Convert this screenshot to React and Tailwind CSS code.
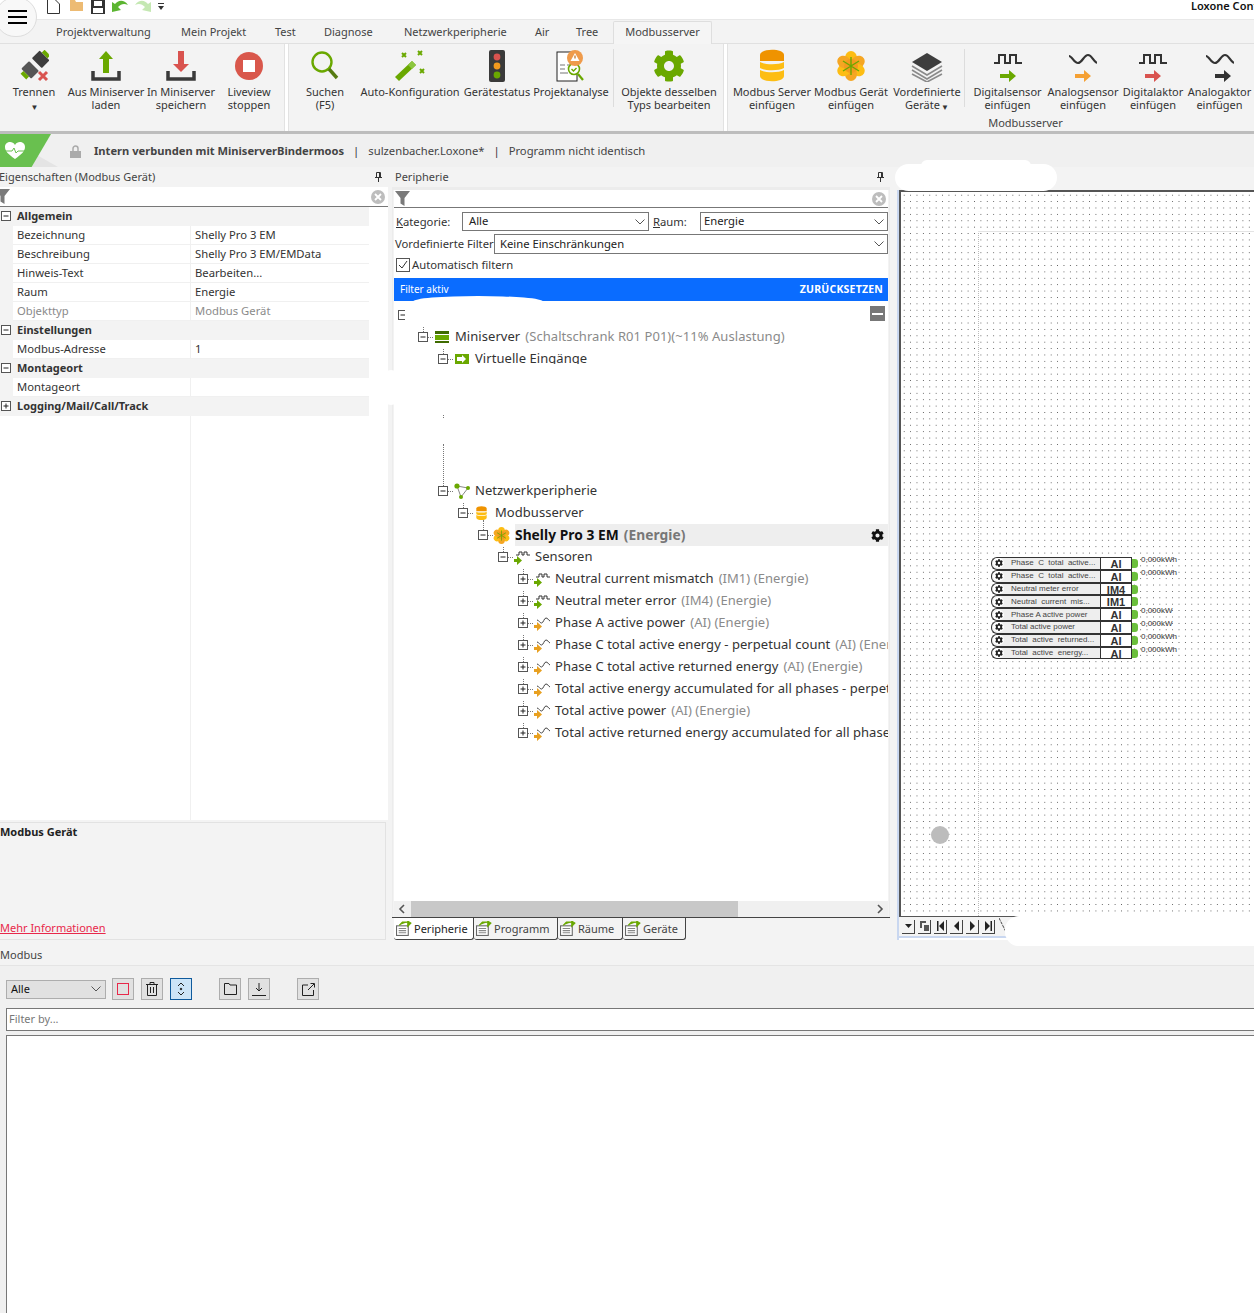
import React from "react";
import { FaCog } from "react-icons/fa";

const Pulse = ({ w = 28, h = 12, c = "#333", sw = 2 }) => (
  <svg width={w} height={h} viewBox="0 0 28 12" fill="none" stroke={c} strokeWidth={sw}>
    <path d="M0 10h5V2h6v8h5V2h6v8h6" />
  </svg>
);

const Wave = ({ w = 28, h = 12, c = "#333", sw = 2.2 }) => (
  <svg width={w} height={h} viewBox="0 0 28 12" fill="none" stroke={c} strokeWidth={sw}>
    <path d="M0 3c3 0 5 7 9 7s6-8 10-8 5 6 9 8" />
  </svg>
);

const Arrow = ({ c }) => (
  <svg width="16" height="12" viewBox="0 0 16 12" fill={c}>
    <path d="M0 4h9V0l7 6-7 6V8H0z" />
  </svg>
);

const SensorIcon = ({ kind, arrow, shift = 0 }) => (
  <div className="flex flex-col items-center gap-[5px] pt-[2px]">
    {kind === "pulse" ? <Pulse /> : <Wave />}
    <div style={{ marginLeft: shift }}>
      <Arrow c={arrow} />
    </div>
  </div>
);

const PlugIcon = () => (
  <svg width="30" height="32" viewBox="0 0 30 32">
    <g transform="rotate(45 15 16)">
      <rect x="8" y="1" width="14" height="11" rx="1" fill="#3d3d3d" />
      <rect x="11" y="-3" width="8" height="4" fill="#6aa800" />
      <rect x="8" y="16" width="14" height="11" rx="1" fill="#555" />
      <rect x="11" y="27" width="8" height="4" fill="#6aa800" />
    </g>
    <path d="M20 22l8 8M28 22l-8 8" stroke="#d9534f" strokeWidth="3" />
  </svg>
);

const TrayIcon = ({ up }) => (
  <svg width="30" height="32" viewBox="0 0 30 32">
    <path d="M2 21v8h26v-8" fill="none" stroke="#3a3a3a" strokeWidth="3.5" />
    {up ? (
      <path d="M15 1l7 8h-4v14h-6V9H8z" fill="#6aa800" />
    ) : (
      <path d="M12 1h6v13h5l-8 8-8-8h5z" fill="#d9534f" />
    )}
  </svg>
);

const StopIcon = () => (
  <svg width="30" height="30" viewBox="0 0 30 30">
    <circle cx="15" cy="15" r="14" fill="#d9574b" />
    <rect x="9" y="9" width="12" height="12" fill="#fff" />
  </svg>
);

const SearchIcon = () => (
  <svg width="28" height="32" viewBox="0 0 28 32" fill="none">
    <circle cx="11" cy="12" r="9.5" stroke="#6aa800" strokeWidth="2.4" />
    <path d="M18 19l8 9" stroke="#557a10" strokeWidth="3.4" />
  </svg>
);

const WandIcon = () => (
  <svg width="32" height="32" viewBox="0 0 32 32">
    <path d="M1 27L18 11l4 4L5 31z" fill="#6aa800" />
    <path d="M14 15l4-4 4 4-4 4z" fill="#8cc63f" />
    <path d="M8 3l4 4M12 3L8 7M24 1l4 4M28 1l-4 4M26 19l4 4M30 19l-4 4" stroke="#6aa800" strokeWidth="2" />
  </svg>
);

const TrafficIcon = () => (
  <svg width="16" height="32" viewBox="0 0 16 32">
    <rect width="16" height="32" rx="2" fill="#3a3a3a" />
    <circle cx="8" cy="7" r="3.4" fill="#d9534f" />
    <circle cx="8" cy="16" r="3.4" fill="#f39a1e" />
    <circle cx="8" cy="25" r="3.4" fill="#6aa800" />
  </svg>
);

const AnalyseIcon = () => (
  <svg width="30" height="32" viewBox="0 0 30 32">
    <rect x="1" y="2" width="20" height="29" fill="#fff" stroke="#222" />
    <path d="M4 15h5M4 19h5M4 23h8M11 15h3" stroke="#777" strokeWidth="1.2" />
    <circle cx="18" cy="19" r="5.5" fill="#fff" stroke="#6aa800" strokeWidth="1.6" />
    <path d="M15.5 19l2 2 3-3" stroke="#6aa800" fill="none" strokeWidth="1.4" />
    <path d="M22 24l5 6" stroke="#6aa800" strokeWidth="2.2" />
    <circle cx="19" cy="8" r="8" fill="#ef9b4b" />
    <path d="M19 3l4.5 8h-9z" fill="#fff" />
    <rect x="18.4" y="5.5" width="1.2" height="3" fill="#b96a20" />
  </svg>
);

const DbIcon = ({ s = 30 }) => (
  <svg width={s} height={(s * 34) / 30} viewBox="0 0 30 34">
    <path d="M3 6c0-7 24-7 24 0v6H3z" fill="#ef9300" />
    <path d="M3 13c5 3 19 3 24 0v6c-5 3-19 3-24 0z" fill="#fdbd13" />
    <path d="M3 21c5 3 19 3 24 0v6c0 7-24 7-24 0z" fill="#fdbd13" />
  </svg>
);

const FlowerIcon = ({ s = 30 }) => (
  <svg width={s} height={s} viewBox="0 0 30 30">
    {[0, 60, 120, 180, 240, 300].map((a) => (
      <ellipse key={a} cx="15" cy="7" rx="6" ry="7" fill={a % 120 === 0 ? "#fdbd13" : "#f5a623"} transform={`rotate(${a} 15 15)`} />
    ))}
    <circle cx="15" cy="15" r="7" fill="#f39a1e" />
    <path d="M15 6v18M7 10l16 10M23 10L7 20" stroke="#6aa800" strokeWidth="1.4" />
  </svg>
);

const LayersIcon = () => (
  <svg width="32" height="32" viewBox="0 0 32 32">
    <path d="M16 3l15 9-15 9-15-9z" fill="#3d3d3d" />
    <path d="M1 16l15 9 15-9M1 20l15 9 15-9M1 24l15 8 15-8" fill="none" stroke="#8a8a8a" strokeWidth="1.6" />
  </svg>
);

const RibbonItem = ({ w, icon, top, bottom, arrow }) => (
  <div className="flex flex-col items-center shrink-0 whitespace-nowrap" style={{ width: w }}>
    <div className="h-[34px] flex items-center justify-center">{icon}</div>
    <div className="mt-[2px] leading-[13px] text-center text-[#333]">
      <div>{top}</div>
      <div>
        {bottom}
        {arrow && <span className="text-[8px] align-middle ml-[1px]">▼</span>}
      </div>
    </div>
  </div>
);

const Sep = () => <div className="w-px h-[58px] bg-[#dcdcdc] shrink-0" />;

const Pin = () => (
  <svg width="7" height="10" viewBox="0 0 7 10" fill="none" stroke="#333">
    <path d="M1.5 .5h4v5h-4zM0 5.5h7M3.5 6v4M4.5 1v4" />
  </svg>
);

const Funnel = () => (
  <svg width="15" height="15" viewBox="0 0 15 15" fill="#7a7a7a">
    <path d="M0 0h15L9.5 7v8l-4-2.5V7z" />
  </svg>
);

const ClearBtn = () => (
  <div className="w-[14px] h-[14px] rounded-full bg-[#bdbdbd] flex items-center justify-center">
    <svg width="8" height="8" viewBox="0 0 8 8" stroke="#fff" strokeWidth="1.8">
      <path d="M1 1l6 6M7 1L1 7" />
    </svg>
  </div>
);

const Box = ({ open }) => (
  <svg width="11" height="11" viewBox="0 0 11 11" fill="none" stroke="#555">
    <rect x=".5" y=".5" width="9" height="9" fill="#fff" />
    <path d="M2.5 5h5" stroke="#222" />
    {!open && <path d="M5 2.5v5" stroke="#222" />}
  </svg>
);

const PropRow = ({ label, value, muted }) => (
  <div className={`flex h-[19px] leading-[18px] ${muted ? "text-[#8a8a8a]" : "text-[#333]"}`}>
    <div className="w-[13px] shrink-0 bg-[#f3f3f3]" />
    <div className="w-[178px] shrink-0 pl-[4px] border-b border-r border-[#f0f0f0]">{label}</div>
    <div className="w-[178px] shrink-0 pl-[4px] border-b border-[#f0f0f0]">{value}</div>
  </div>
);

const PropGroup = ({ label, open = true }) => (
  <div className="flex items-center h-[19px] w-[369px] bg-[#f3f3f3] font-bold text-[11px] text-[#333]">
    <div className="w-[17px] pl-px shrink-0">
      <Box open={open} />
    </div>
    {label}
  </div>
);

// tree connector: box with dotted lines, all rows share it
const Expander = ({ open }) => (
  <div className="relative w-[15px] h-[22px] shrink-0">
    <div className="absolute left-[5px] -top-[4px] h-[10px] border-l border-dotted border-[#777]" />
    <div className="absolute left-0 top-[6px]">
      <Box open={open} />
    </div>
    <div className="absolute left-[10px] top-[11px] w-[5px] border-t border-dotted border-[#777]" />
  </div>
);

const SmallSensor = ({ kind }) => (
  <svg width="17" height="17" viewBox="0 0 17 17" fill="none">
    {kind === "pulse" ? (
      <path d="M3 6h3V3h3v3h2V3h3v3h3" stroke="#333" strokeWidth="1" />
    ) : (
      <path d="M4 5c2 0 2.5 3 4.5 3S11 3 13 3s2 2 4 3" stroke="#444" strokeWidth="1" />
    )}
    <path d="M0 10h3V7l5 4.5L3 16v-3H0z" transform="translate(1 0)" fill={kind === "pulse" ? "#6aa800" : "#e8a020"} />
  </svg>
);

const MiniserverIcon = () => (
  <svg width="14" height="12" viewBox="0 0 14 12">
    <rect width="14" height="3" fill="#3f6b00" />
    <rect y="4" width="14" height="5" fill="#6aa800" />
    <rect y="10" width="14" height="2" fill="#3f6b00" />
  </svg>
);

const NetIcon = () => (
  <svg width="16" height="16" viewBox="0 0 16 16">
    <path d="M3 3l11 2-7 9z" fill="none" stroke="#888" />
    <circle cx="3" cy="3" r="2.6" fill="#6aa800" />
    <circle cx="14" cy="5" r="2" fill="#6aa800" />
    <circle cx="7" cy="14" r="2" fill="#6aa800" />
  </svg>
);

const TreeRow = ({ level, open, icon, name, extra }) => (
  <div className="flex items-center h-[22px] whitespace-nowrap overflow-hidden" style={{ paddingLeft: 24 + level * 20 }}>
    <Expander open={open} />
    <div className="w-[17px] shrink-0 flex items-center justify-center">{icon}</div>
    <span className="ml-[5px] text-[#333]">{name}</span>
    {extra && <span className="ml-[5px] text-[#8a8a8a]">{extra}</span>}
  </div>
);

const sensors = [
  ["pulse", "Neutral current mismatch", "(IM1) (Energie)"],
  ["pulse", "Neutral meter error", "(IM4) (Energie)"],
  ["wave", "Phase A active power", "(AI) (Energie)"],
  ["wave", "Phase C total active energy - perpetual count", "(AI) (Energie)"],
  ["wave", "Phase C total active returned energy", "(AI) (Energie)"],
  ["wave", "Total active energy accumulated for all phases - perpetual count", "(AI) (Energie)"],
  ["wave", "Total active power", "(AI) (Energie)"],
  ["wave", "Total active returned energy accumulated for all phases", "(AI) (Energie)"],
];

const nodeRows = [
  ["Phase  C  total  active...", "AI", "0,000kWh"],
  ["Phase  C  total  active...", "AI", "0,000kWh"],
  ["Neutral meter error", "IM4", ""],
  ["Neutral  current  mis...", "IM1", ""],
  ["Phase A active power", "AI", "0,000kW"],
  ["Total active power", "AI", "0,000kW"],
  ["Total  active  returned...", "AI", "0,000kWh"],
  ["Total  active  energy...", "AI", "0,000kWh"],
];

const SelectBox = ({ className, value, pad = "pl-[6px]" }) => (
  <div className={`flex items-center justify-between border border-[#777] bg-white ${pad} pr-[3px] ${className}`}>
    <span className="text-[#222]">{value}</span>
    <svg width="10" height="6" viewBox="0 0 10 6" fill="none" stroke="#555">
      <path d="M.5 .5L5 5 9.5 .5" />
    </svg>
  </div>
);

const TabIcon = () => (
  <svg width="16" height="15" viewBox="0 0 15 14" fill="none">
    <rect x=".5" y="4.5" width="11" height="9" fill="#fff" stroke="#666" />
    <path d="M2.5 7h7M2.5 9h7M2.5 11h7" stroke="#888" />
    <path d="M3 4l3-3h5M11 0l3 2-3 3z" fill="#6aa800" stroke="#6aa800" />
  </svg>
);

const BottomTab = ({ w, label, active }) => (
  <div
    style={{ width: w }}
    className={`h-[22px] flex items-center pl-[2px] gap-[2px] border-r border-b border-[#444] rounded-br-[3px] rounded-bl-[3px] ${
      active ? "bg-white text-[#222]" : "bg-[#f3f3f3] text-[#444]"
    }`}
  >
    <TabIcon />
    <span className="pt-px">{label}</span>
  </div>
);

const NavBtn = ({ children }) => (
  <div className="w-[13px] h-[14px] border-r border-b border-[#444] bg-[#f3f3f3] flex items-center justify-center">
    <svg width="9" height="10" viewBox="0 0 9 10" fill="#222">
      {children}
    </svg>
  </div>
);

const ToolBtn = ({ children, active }) => (
  <div
    className={`w-[22px] h-[22px] flex items-center justify-center border ${
      active ? "border-[#0f5a9c] bg-[#cce4f7]" : "border-[#adadad] bg-[#e1e1e1]"
    }`}
  >
    {children}
  </div>
);

const App = () => {
  return (
    <div className="relative w-[1254px] h-[1313px] overflow-hidden bg-[#f3f3f3] font-['Noto_Sans',sans-serif] text-[11px] text-[#333]">
      {/* titlebar */}
      <div className="h-[19px] bg-white flex items-start pl-[47px] relative">
        <svg width="13" height="14" viewBox="0 0 13 14" fill="#fff" stroke="#333" className="mr-[10px]">
          <path d="M.5 0v13.5h12V4L8.5 0" />
        </svg>
        <svg width="13" height="11" viewBox="0 0 13 11" className="mr-[8px]">
          <path d="M0 0h5l1 2h7v9H0z" fill="#edbb73" />
        </svg>
        <svg width="14" height="14" viewBox="0 0 14 14" className="mr-[7px]">
          <path d="M0 0h14v14H0z" fill="#333" />
          <path d="M3 0h8v5H3z" fill="#fff" transform="translate(0 1)" />
          <path d="M2 8h10v5H2z" fill="#fff" />
        </svg>
        <svg width="16" height="12" viewBox="0 0 16 12" className="mr-[7px]">
          <path d="M0 12V2l3 2c3-4 9-5 13 1-4-2-7-1-10 2l3 3z" fill="#5cb531" />
        </svg>
        <svg width="16" height="12" viewBox="0 0 16 12" className="mr-[7px]">
          <path d="M16 12V2l-3 2C10 0 4-1 0 5c4-2 7-1 10 2l-3 3z" fill="#c5e8b3" />
        </svg>
        <svg width="6" height="8" viewBox="0 0 6 8" fill="#333" className="mt-[3px]">
          <path d="M0 0h6v1H0zM0 3h6L3 7z" />
        </svg>
        <span className="absolute left-[1191px] top-[-2px] font-semibold text-[11px] text-[#111] whitespace-nowrap">Loxone Config</span>
      </div>

      {/* hamburger */}
      <div className="absolute -left-[5px] -top-[3px] w-[42px] h-[40px] rounded-full bg-[#f8f8f8] border border-[#ddd] flex flex-col gap-[4px] items-center justify-center pl-[2px]">
        <div className="w-[19px] h-[2px] bg-black" />
        <div className="w-[19px] h-[2px] bg-black" />
        <div className="w-[19px] h-[2px] bg-black" />
      </div>

      {/* ribbon tabs */}
      <div className="h-[25px] flex items-end pl-[56px] border-t border-[#e8e8e8] border-b border-b-[#e0e0e0] text-[#444] whitespace-nowrap">
        <div className="h-[23px] leading-[24px] w-[125px]">Projektverwaltung</div>
        <div className="h-[23px] leading-[24px] w-[94px]">Mein Projekt</div>
        <div className="h-[23px] leading-[24px] w-[49px]">Test</div>
        <div className="h-[23px] leading-[24px] w-[80px]">Diagnose</div>
        <div className="h-[23px] leading-[24px] w-[131px]">Netzwerkperipherie</div>
        <div className="h-[23px] leading-[24px] w-[41px]">Air</div>
        <div className="h-[23px] leading-[24px] w-[37px]">Tree</div>
        <div className="h-[23px] leading-[20px] w-[99px] text-center border border-b-0 border-[#dedede] rounded-t-[2px] bg-[#f5f5f5] -mb-px">Modbusserver</div>
      </div>

      {/* ribbon */}
      <div className="h-[90px] flex border-b-[3px] border-[#bdbdbd] bg-[#f3f3f3]">
        <div className="w-[285px] pt-[5px] flex border-r border-[#e2e2e2] shrink-0">
          <RibbonItem w={68} icon={<PlugIcon />} top="Trennen" bottom="" arrow />
          <RibbonItem w={76} icon={<TrayIcon up />} top="Aus Miniserver" bottom="laden" />
          <RibbonItem w={74} icon={<TrayIcon />} top="In Miniserver" bottom="speichern" />
          <RibbonItem w={62} icon={<StopIcon />} top="Liveview" bottom="stoppen" />
        </div>
        <div className="w-[3px] shrink-0 bg-white" />
        <div className="w-[436px] pt-[5px] pl-[6px] flex border-r border-l border-[#e2e2e2] shrink-0">
          <RibbonItem w={60} icon={<SearchIcon />} top="Suchen" bottom="(F5)" />
          <RibbonItem w={110} icon={<WandIcon />} top="Auto-Konfiguration" bottom="" />
          <RibbonItem w={64} icon={<TrafficIcon />} top="Gerätestatus" bottom="" />
          <RibbonItem w={84} icon={<AnalyseIcon />} top="Projektanalyse" bottom="" />
          <Sep />
          <RibbonItem w={110} icon={<FaCog size={32} color="#6aa800" />} top="Objekte desselben" bottom="Typs bearbeiten" />
        </div>
        <div className="w-[3px] shrink-0 bg-white" />
        <div className="flex-1 pt-[5px] border-l border-[#e2e2e2] relative">
          <div className="flex pl-[4px]">
            <RibbonItem w={80} icon={<DbIcon />} top="Modbus Server" bottom="einfügen" />
            <RibbonItem w={78} icon={<FlowerIcon />} top="Modbus Gerät" bottom="einfügen" />
            <RibbonItem w={74} icon={<LayersIcon />} top="Vordefinierte" bottom="Geräte" arrow />
            <Sep />
            <RibbonItem w={85} icon={<SensorIcon kind="pulse" arrow="#6aa800" />} top="Digitalsensor" bottom="einfügen" />
            <RibbonItem w={66} icon={<SensorIcon kind="wave" arrow="#f5a033" />} top="Analogsensor" bottom="einfügen" />
            <RibbonItem w={74} icon={<SensorIcon kind="pulse" arrow="#d9534f" />} top="Digitalaktor" bottom="einfügen" />
            <RibbonItem w={59} icon={<SensorIcon kind="wave" arrow="#333" shift={6} />} top="Analogaktor" bottom="einfügen" />
          </div>
          <div className="pl-[69px] text-center leading-[13px] text-[#444] mt-[3px]">Modbusserver</div>
        </div>
      </div>

      {/* status bar */}
      <div className="h-[33px] flex items-center bg-[#f0f0f0] whitespace-nowrap relative text-[11.25px] pt-[2px]">
        <div className="absolute left-0 top-0 w-[58px] h-[33px] bg-[#e4e4e4] [clip-path:polygon(0_0,100%_100%,0_100%)]" />
        <div className="absolute left-0 top-0 w-[51px] h-[33px] bg-[#69c04f] [clip-path:polygon(0_0,100%_0,62%_100%,0_100%)] flex items-center pl-[5px]">
          <svg width="20" height="18" viewBox="0 0 20 18">
            <path d="M10 17C3 12 0 9 0 5c0-5 7-7 10-2 3-5 10-3 10 2 0 4-3 7-10 12z" fill="#fff" />
            <path d="M0 9h7l2-3 2 5 2-2h7" stroke="#69c04f" fill="none" />
          </svg>
        </div>
        <svg width="11" height="13" viewBox="0 0 11 13" className="ml-[70px] mr-[13px]">
          <path d="M3 6V3.5a2.5 2.5 0 015 0V6" fill="none" stroke="#aaa" strokeWidth="1.5" />
          <rect y="6" width="11" height="7" fill="#aaa" />
        </svg>
        <span className="font-bold text-[11.15px] text-[#444]">Intern verbunden mit MiniserverBindermoos</span>
        <span className="mx-[9px]">|</span>
        <span className="text-[#444]">sulzenbacher.Loxone*</span>
        <span className="mx-[9px]">|</span>
        <span className="text-[#444]">Programm nicht identisch</span>
      </div>

      {/* main */}
      <div className="flex h-[773px]">
        {/* properties */}
        <div className="w-[388px] shrink-0 flex flex-col">
          <div className="h-[20px] flex items-center justify-between pr-[6px] text-[#444]">
            <span className="-ml-px">Eigenschaften (Modbus Gerät)</span>
            <Pin />
          </div>
          <div className="h-[20px] bg-white border-b border-[#777] flex items-center justify-between pr-[3px]">
            <div className="-ml-[5px]">
              <Funnel />
            </div>
            <ClearBtn />
          </div>
          <div className="flex-1 bg-white flex flex-col text-[11.25px]">
            <PropGroup label="Allgemein" />
            <PropRow label="Bezeichnung" value="Shelly Pro 3 EM" />
            <PropRow label="Beschreibung" value="Shelly Pro 3 EM/EMData" />
            <PropRow label="Hinweis-Text" value="Bearbeiten..." />
            <PropRow label="Raum" value="Energie" />
            <PropRow label="Objekttyp" value="Modbus Gerät" muted />
            <PropGroup label="Einstellungen" />
            <PropRow label="Modbus-Adresse" value="1" />
            <PropGroup label="Montageort" />
            <PropRow label="Montageort" value="" />
            <PropGroup label="Logging/Mail/Call/Track" open={false} />
            <div className="flex-1 ml-[190px] border-l border-[#f0f0f0]" />
          </div>
          <div className="h-[118px] mt-[2px] border border-[#e2e2e2] border-l-0 mr-[2px] flex flex-col justify-between pb-[3px] bg-[#f3f3f3]">
            <div className="font-bold text-[#222] mt-[1px]">Modbus Gerät</div>
            <a className="text-[#e8284a] underline">Mehr Informationen</a>
          </div>
        </div>

        {/* peripherie */}
        <div className="w-[498px] ml-[4px] shrink-0 flex flex-col">
          <div className="h-[20px] flex items-center justify-between pl-[3px] pr-[6px] text-[#444]">
            <span>Peripherie</span>
            <Pin />
          </div>
          <div className="h-[730px] flex flex-col pl-[1px] pr-px border-l border-r border-t-[3px] border-[#ececec] bg-[#f3f3f3]">
            <div className="h-[18px] bg-white border-b border-[#777] flex items-center justify-between pr-[2px] pl-[1px] shrink-0">
              <Funnel />
              <ClearBtn />
            </div>
            <div className="text-[11.25px] bg-white shrink-0">
              <div className="h-[23px] flex items-end pl-[2px]">
                <span className="w-[66px]">
                  <u>K</u>ategorie:
                </span>
                <SelectBox className="w-[187px] h-[19px]" value="Alle" />
                <span className="w-[51px] pl-[4px]">
                  <u>R</u>aum:
                </span>
                <SelectBox className="w-[188px] h-[19px]" value="Energie" pad="pl-[3px]" />
              </div>
              <div className="h-[23px] pt-[3px] flex items-center">
                <span className="w-[100px] pl-px whitespace-nowrap">Vordefinierte Filter</span>
                <SelectBox className="w-[394px] h-[20px]" value="Keine Einschränkungen" pad="pl-[5px]" />
              </div>
              <div className="h-[24px] flex items-center pl-[2px] gap-[2px] pb-[2px]">
                <div className="w-[14px] h-[14px] border border-[#555] flex items-center justify-center">
                  <svg width="10" height="10" viewBox="0 0 10 10" fill="none" stroke="#333">
                    <path d="M1 5l3 3 5-7" />
                  </svg>
                </div>
                Automatisch filtern
              </div>
            </div>
            <div className="h-[23px] shrink-0 bg-[#0a6cff] text-white flex items-center justify-between pl-[6px] pr-[5px] text-[10px] relative overflow-hidden">
              <span>Filter aktiv</span>
              <span className="font-bold text-[10.5px] tracking-[0.2px]">ZURÜCKSETZEN</span>
              <div className="absolute left-[19px] -bottom-[6px] w-[130px] h-[11px] rounded-[50%] bg-white" />
            </div>
            <div className="flex-1 bg-white relative overflow-hidden text-[13px] tracking-[0.05px] pt-[3px]">
              <div className="absolute right-[3px] top-[5px] w-[15px] h-[15px] bg-[#777] flex items-center justify-center">
                <div className="w-[11px] h-[2px] bg-white" />
              </div>
              <div className="h-[22px] flex items-center pl-[4px]">
                <div className="w-[7px] h-[10px] overflow-hidden">
                  <Box open />
                </div>
              </div>
              <TreeRow level={0} open icon={<MiniserverIcon />} name="Miniserver" extra="(Schaltschrank R01 P01)(~11% Auslastung)" />
              <div className="h-[22px]">
                <div className="h-[16px] overflow-hidden">
                  <TreeRow
                    level={1}
                    open
                    icon={
                      <svg width="14" height="10" viewBox="0 0 14 10">
                        <rect width="14" height="10" fill="#6aa800" />
                        <path d="M2 3h5V1l4 4-4 4V7H2z" fill="#fff" />
                      </svg>
                    }
                    name="Virtuelle Eingänge"
                  />
                </div>
              </div>
              <div className="h-[110px] relative">
                <div className="absolute left-[49px] top-[45px] h-[3px] border-l border-dotted border-[#777]" />
                <div className="absolute left-[49px] bottom-0 h-[36px] border-l border-dotted border-[#777]" />
              </div>
              <TreeRow level={1} open icon={<NetIcon />} name="Netzwerkperipherie" />
              <TreeRow level={2} open icon={<DbIcon s={13} />} name="Modbusserver" />
              <div className="relative">
                <div className="absolute left-[121px] right-0 top-0 h-[22px] bg-[#eeeeee]" />
                <div className="relative flex items-center h-[22px] whitespace-nowrap pl-[84px]">
                  <Expander open />
                  <div className="w-[17px] shrink-0 flex items-center justify-center">
                    <FlowerIcon s={17} />
                  </div>
                  <span className="ml-[5px] font-bold text-[13.75px] text-[#111]">Shelly Pro 3 EM</span>
                  <span className="ml-[5px] font-bold text-[13.75px] text-[#777]">(Energie)</span>
                  <FaCog size={13} color="#111" className="ml-auto mr-[4px]" />
                </div>
              </div>
              <TreeRow level={4} open icon={<SmallSensor kind="pulse" />} name="Sensoren" />
              {sensors.map(([kind, name, extra]) => (
                <TreeRow key={name} level={5} icon={<SmallSensor kind={kind} />} name={name} extra={extra} />
              ))}
            </div>
            <div className="h-[16px] shrink-0 bg-[#f0f0f0] flex items-center justify-between px-[4px] relative">
              <svg width="7" height="10" viewBox="0 0 7 10" fill="none" stroke="#555" strokeWidth="1.6">
                <path d="M6 1L2 5l4 4" />
              </svg>
              <div className="absolute left-[17px] top-0 w-[327px] h-[16px] bg-[#c8c8c8]" />
              <svg width="7" height="10" viewBox="0 0 7 10" fill="none" stroke="#555" strokeWidth="1.6">
                <path d="M1 1l4 4-4 4" />
              </svg>
            </div>
          </div>
          <div className="h-[23px] border-t border-[#444] flex pl-[2px] shrink-0">
            <BottomTab w={80} label="Peripherie" active />
            <BottomTab w={84} label="Programm" />
            <BottomTab w={65} label="Räume" />
            <BottomTab w={63} label="Geräte" />
          </div>
        </div>

        {/* canvas */}
        <div className="ml-[7px] flex-1 relative flex flex-col">
          <div className="h-[23px] shrink-0" />
          <div className="flex-1 bg-white border-l-[2px] border-[#c9d7f0]">
            <div className="relative h-[727px] border-l-[2px] border-t-[2px] border-b-[1px] border-[#555] bg-[radial-gradient(circle,#555_0.7px,transparent_0.9px)] bg-[size:6.4px_6.4px] bg-white">
              <div className="absolute left-[77px] top-[39px] bottom-0 border-l border-dotted border-[#bbb]" />
              <div className="absolute left-[77px] top-[39px] right-0 border-t border-[#e4e4e4]" />
              <div className="absolute left-[30px] top-[634px] w-[18px] h-[18px] rounded-full bg-[#bcbcbc]" />
              <div className="absolute left-[90px] top-[365px] w-[200px]">
                {nodeRows.map(([label, type, value], i) => (
                  <div key={i} className="flex h-[12.8px] relative font-['Liberation_Sans',sans-serif]">
                    <div className="w-[109px] border border-[#333] border-r-0 rounded-l-[6px] bg-[#eeeeee] flex items-center overflow-hidden">
                      <div className="w-[11px] h-[10px] rounded-full bg-white flex items-center justify-center shrink-0 ml-px">
                        <FaCog size={8} color="#222" />
                      </div>
                      <span className="ml-[7px] text-[8px] text-[#444] whitespace-pre leading-none">{label}</span>
                    </div>
                    <div className="w-[32px] border border-[#333] bg-white text-[11px] font-semibold text-[#333] text-center leading-[13px]">{type}</div>
                    <div className="w-[6px] h-[9px] mt-[2px] bg-[#6bbf3c] rounded-r-[3px]" />
                    {value && <span className="ml-[3px] -mt-[2px] text-[8px] leading-[10px] text-[#333]">{value}</span>}
                  </div>
                ))}
              </div>
            </div>
            <div className="h-[21px] flex items-center gap-[3px] pl-[3px] bg-[#f3f3f3] border-b-[2px] border-[#c9d7f0]">
              <NavBtn>
                <path d="M1 3h7L4.5 7z" />
              </NavBtn>
              <NavBtn>
                <path d="M0 0h6v2H2v5H0zM4 4h5v6H4z" fill="#555" />
              </NavBtn>
              <NavBtn>
                <path d="M1 0h1.5v10H1zM8 0v10L3 5z" />
              </NavBtn>
              <NavBtn>
                <path d="M7 0v10L2 5z" />
              </NavBtn>
              <NavBtn>
                <path d="M2 0v10l5-5z" />
              </NavBtn>
              <NavBtn>
                <path d="M1 0v10l5-5zM6.5 0H8v10H6.5z" />
              </NavBtn>
              <svg width="10" height="18" viewBox="0 0 10 18" fill="none" stroke="#444" className="ml-[1px]">
                <path d="M0 0l9 18" strokeDasharray="3 1" />
              </svg>
            </div>
          </div>
          {/* redacted patches */}
          <div className="absolute -left-[2px] top-[-3px] w-[162px] h-[27px] rounded-[14px] bg-white" />
          <div className="absolute left-[24px] top-[-7px] w-[110px] h-[12px] rounded-full bg-white" />
          <div className="absolute left-[108px] bottom-[-6px] w-[260px] h-[30px] rounded-l-[14px] bg-white" />
        </div>
      </div>

      {/* modbus section */}
      <div className="mt-[6px] h-[20px] flex items-center border-b border-[#e4e4e4] text-[#444]">Modbus</div>
      <div className="h-[42px] bg-[#f0f0f0] flex items-center pl-[6px] pt-[4px]">
        <div className="w-[100px] h-[19px] bg-[#e1e1e1] border border-[#adadad] flex items-center justify-between pl-[4px] pr-[4px] text-[#111]">
          Alle
          <svg width="10" height="6" viewBox="0 0 10 6" fill="none" stroke="#555">
            <path d="M.5 .5L5 5 9.5 .5" />
          </svg>
        </div>
        <div className="flex gap-[7px] ml-[6px]">
          <ToolBtn>
            <div className="w-[12px] h-[12px] border border-[#e8284a]" />
          </ToolBtn>
          <ToolBtn>
            <svg width="12" height="14" viewBox="0 0 12 14" fill="none" stroke="#222">
              <path d="M0 2.5h12M4 2.5V.5h4v2M1.5 3v10.5h9V3M4.5 5v6M7.5 5v6" />
            </svg>
          </ToolBtn>
          <ToolBtn active>
            <svg width="10" height="14" viewBox="0 0 10 14" fill="none" stroke="#222">
              <path d="M2 4l3-3 3 3M2 10l3 3 3-3" />
              <circle cx="5" cy="7" r=".8" fill="#222" />
            </svg>
          </ToolBtn>
        </div>
        <div className="flex gap-[7px] ml-[27px]">
          <ToolBtn>
            <svg width="13" height="12" viewBox="0 0 13 12" fill="none" stroke="#222">
              <path d="M.5 11.5V.5H5L6 2h6.5v9.5z" />
            </svg>
          </ToolBtn>
          <ToolBtn>
            <svg width="14" height="13" viewBox="0 0 14 13" fill="none" stroke="#222">
              <path d="M7 0v8M4 5l3 3 3-3M0 12.5h14" />
            </svg>
          </ToolBtn>
        </div>
        <div className="ml-[27px]">
          <ToolBtn>
            <svg width="13" height="13" viewBox="0 0 13 13" fill="none" stroke="#222">
              <path d="M6 2H.5v10.5h11V7M6 7l6-6M8.5 .5h4v4" />
            </svg>
          </ToolBtn>
        </div>
      </div>
      <div className="pl-[6px] bg-[#f0f0f0]">
        <div className="h-[23px] w-[1260px] bg-white border border-[#777] flex items-center pl-[2px] text-[#777]">Filter by...</div>
      </div>
      <div className="pl-[6px] pt-[4px] bg-[#f0f0f0] h-[284px]">
        <div className="h-[290px] w-[1260px] bg-white border border-[#777]" />
      </div>

      <div className="absolute left-[384px] top-[370px] w-[14px] h-[35px] rounded-full bg-white" />
    </div>
  );
};

export default App;
